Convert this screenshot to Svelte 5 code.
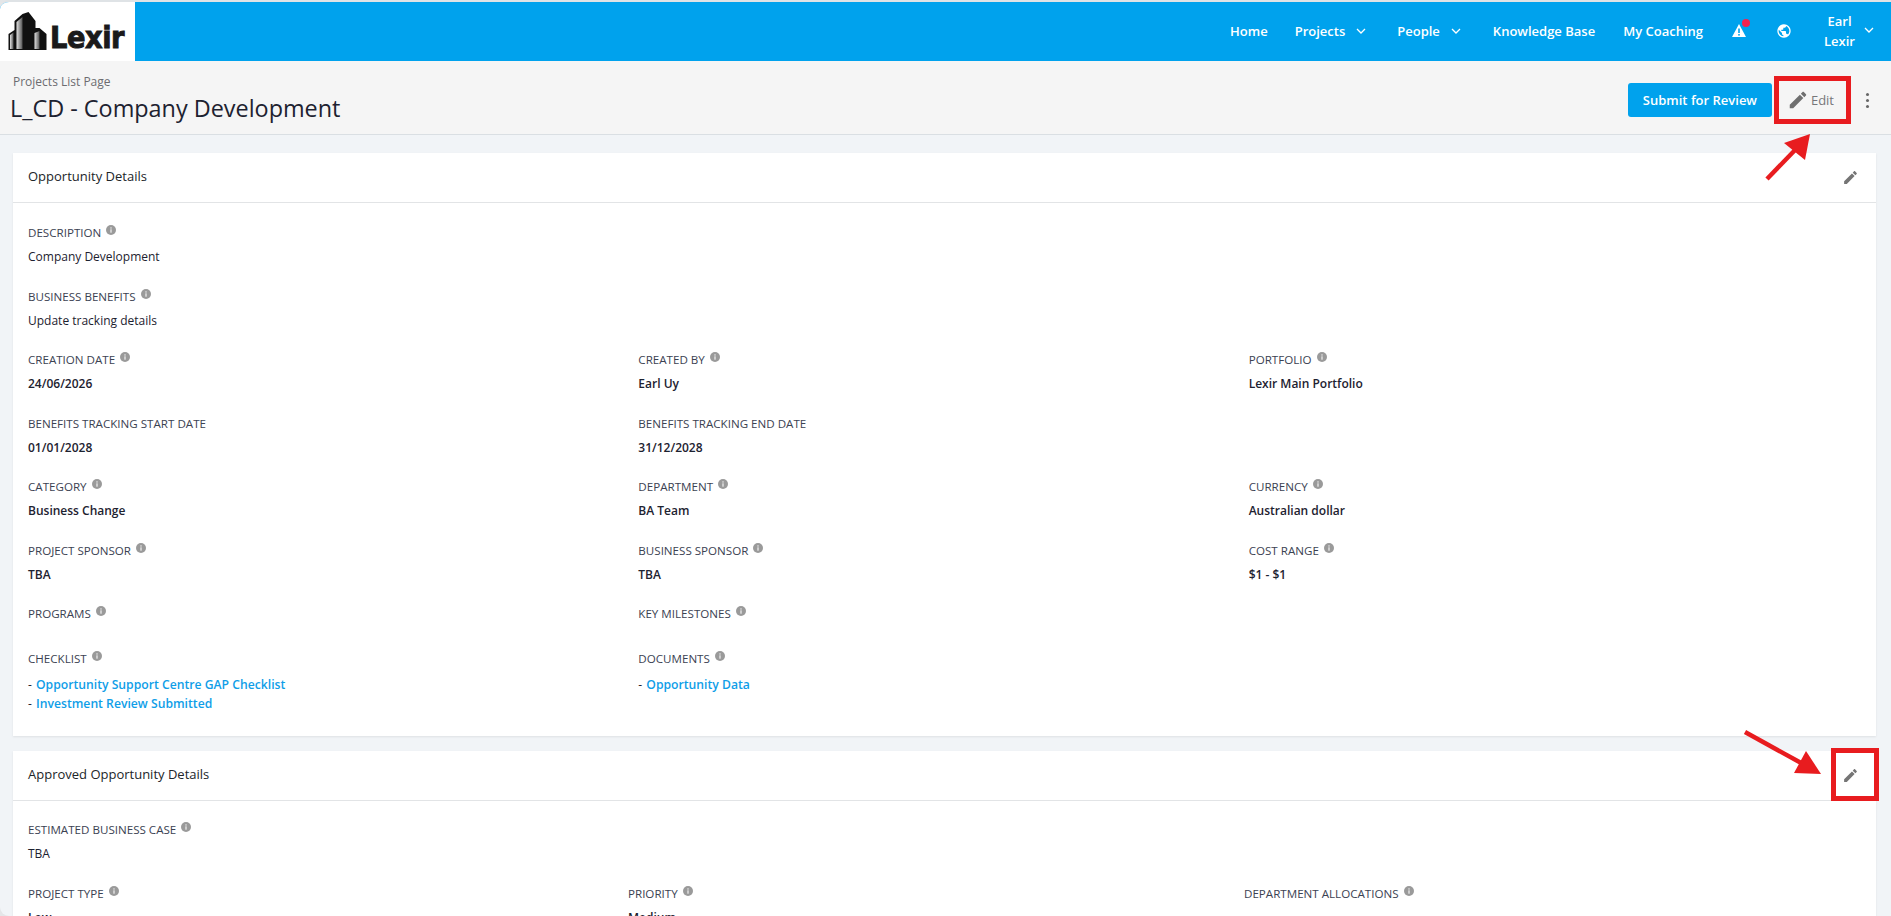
<script>
  const pencil = "M3 17.25V21h3.75L17.81 9.94l-3.75-3.75L3 17.25zM20.71 7.04c.39-.39.39-1.02 0-1.41l-2.34-2.34c-.39-.39-1.02-.39-1.41 0l-1.83 1.83 3.75 3.75 1.83-1.83z";
  const globe = "M12 2C6.48 2 2 6.48 2 12s4.48 10 10 10 10-4.48 10-10S17.52 2 12 2zm-1 17.93c-3.95-.49-7-3.85-7-7.93 0-.62.08-1.21.21-1.79L9 15v1c0 1.1.9 2 2 2v1.93zm6.9-2.54c-.26-.81-1-1.39-1.9-1.39h-1v-3c0-.55-.45-1-1-1H8v-2h2c.55 0 1-.45 1-1V7h2c1.1 0 2-.9 2-2v-.41c2.93 1.19 5 4.06 5 7.41 0 2.08-.8 3.97-2.1 5.39z";

  const wide = [
    { label: "Description", value: "Company Development" },
    { label: "Business Benefits", value: "Update tracking details" }
  ];

  const rows = [
    [{ label: "Creation Date", value: "24/06/2026" }, { label: "Created By", value: "Earl Uy" }, { label: "Portfolio", value: "Lexir Main Portfolio" }],
    [{ label: "Benefits Tracking Start Date", value: "01/01/2028", noInfo: true }, { label: "Benefits Tracking End Date", value: "31/12/2028", noInfo: true }, null],
    [{ label: "Category", value: "Business Change" }, { label: "Department", value: "BA Team" }, { label: "Currency", value: "Australian dollar" }],
    [{ label: "Project Sponsor", value: "TBA" }, { label: "Business Sponsor", value: "TBA" }, { label: "Cost Range", value: "$1 - $1" }]
  ];
</script>

{#snippet info()}
  <svg class="info" viewBox="0 0 10 10" width="10" height="10">
    <circle cx="5" cy="5" r="5" fill="#9a9a9a" />
    <rect x="4.3" y="4.3" width="1.4" height="3.4" fill="#e4e4e4" />
    <rect x="4.3" y="2.3" width="1.4" height="1.3" fill="#e4e4e4" />
  </svg>
{/snippet}

{#snippet chevron()}
  <svg class="chev" viewBox="0 0 10 6" width="10" height="6">
    <path d="M1 1l4 4 4-4" fill="none" stroke="#fff" stroke-width="1.3" />
  </svg>
{/snippet}

{#snippet label(text, noInfo)}
  <div class="label">{text}{#if !noInfo}{@render info()}{/if}</div>
{/snippet}

<div class="page">
  <header class="nav">
    <div class="logo">
      <svg viewBox="0 0 38 38" width="39" height="38">
        <defs>
          <linearGradient id="bld" x1="0" x2="1" y1="0" y2="0">
            <stop offset="0" stop-color="#e2e2e2" />
            <stop offset="1" stop-color="#555" />
          </linearGradient>
        </defs>
        <path d="M0 38V22l6-4V9l8-7 6-2 7 9v7h4l7 6v16z" fill="#111" />
        <path d="M1.5 37V23l3.5-2.5V37z" fill="url(#bld)" />
        <path d="M8 37V10l6-5v32z" fill="url(#bld)" />
        <path d="M26 37V21l5-2v18z" fill="url(#bld)" />
      </svg>
      <span class="logo-text">Lexir</span>
    </div>
    <nav class="links">
      <a class="home">Home</a>
      <a class="projects">Projects {@render chevron()}</a>
      <a class="people">People {@render chevron()}</a>
      <a class="kb">Knowledge Base</a>
      <a class="coaching">My Coaching</a>
      <span class="alert">
        <svg viewBox="0 0 14 13" width="14" height="13">
          <path d="M7 0l7 13H0z" fill="#fff" />
          <rect x="6.2" y="4.5" width="1.6" height="4.5" fill="#00a2ed" />
          <rect x="6.2" y="10" width="1.6" height="1.6" fill="#00a2ed" />
        </svg>
        <i class="dot"></i>
      </span>
      <svg class="globe" viewBox="0 0 24 24" width="16" height="16"><path d={globe} fill="#fff" /></svg>
      <div class="user">
        <div class="user-name">Earl<br />Lexir</div>
        {@render chevron()}
      </div>
    </nav>
  </header>

  <div class="subhead">
    <div>
      <div class="crumb">Projects List Page</div>
      <h1>L_CD - Company Development</h1>
    </div>
    <div class="actions">
      <button class="submit">Submit for Review</button>
      <span class="edit">
        <svg viewBox="0 0 24 24" width="22" height="22"><path d={pencil} fill="#6f6f6f" /></svg>
        Edit
      </span>
      <span class="kebab"><i></i><i></i><i></i></span>
    </div>
  </div>

  <main class="content">
    <section class="card first">
      <div class="card-head">
        <span>Opportunity Details</span>
        <svg viewBox="0 0 24 24" width="17" height="17"><path d={pencil} fill="#757575" /></svg>
      </div>
      <div class="card-body">
        {#each wide as f}
          <div class="field">
            {@render label(f.label)}
            <div class="value plain">{f.value}</div>
          </div>
        {/each}
        {#each rows as row}
          <div class="grid">
            {#each row as f}
              <div class="field">
                {#if f}
                  {@render label(f.label, f.noInfo)}
                  <div class="value">{f.value}</div>
                {/if}
              </div>
            {/each}
          </div>
        {/each}
        <div class="grid short">
          <div class="field">{@render label("Programs")}</div>
          <div class="field">{@render label("Key Milestones")}</div>
          <div class="field"></div>
        </div>
        <div class="grid">
          <div class="field">
            {@render label("Checklist")}
            <div class="value link-line">- <a href="#c">Opportunity Support Centre GAP Checklist</a></div>
            <div class="value link-line">- <a href="#i">Investment Review Submitted</a></div>
          </div>
          <div class="field">
            {@render label("Documents")}
            <div class="value link-line">- <a href="#o">Opportunity Data</a></div>
          </div>
          <div class="field"></div>
        </div>
      </div>
    </section>

    <section class="card">
      <div class="card-head">
        <span>Approved Opportunity Details</span>
        <svg viewBox="0 0 24 24" width="17" height="17"><path d={pencil} fill="#757575" /></svg>
      </div>
      <div class="card-body tight">
        <div class="field">
          {@render label("Estimated Business Case")}
          <div class="value plain">TBA</div>
        </div>
        <div class="grid approved">
          <div class="field">{@render label("Project Type")}<div class="value">Low</div></div>
          <div class="field">{@render label("Priority")}<div class="value">Medium</div></div>
          <div class="field">{@render label("Department Allocations")}</div>
        </div>
      </div>
    </section>
  </main>

  <!-- annotations drawn on top of the screenshot -->
  <div class="mark mark-edit"></div>
  <div class="mark mark-pencil"></div>
  <svg class="arrows" width="1891" height="916" viewBox="0 0 1891 916">
    <line x1="1767" y1="179" x2="1797" y2="148" stroke="#e81c1f" stroke-width="4.5" />
    <polygon points="1810,134 1784,143 1805,160" fill="#e81c1f" />
    <line x1="1745" y1="732" x2="1803" y2="764" stroke="#e81c1f" stroke-width="4.5" />
    <polygon points="1821,774 1806,751 1794,773" fill="#e81c1f" />
  </svg>
</div>

<style>
  :global(body) {
    margin: 0;
    overflow: hidden;
    background: #e4e6e8;
  }

  .page {
    position: relative;
    height: 916px;
    overflow: hidden;
    background: #f1f4f7;
    border-top: 2px solid #dfe3e6;
    border-radius: 9px 0 0 9px;
    box-sizing: border-box;
    font-family: "Open Sans", sans-serif;
    font-size: 12px;
    color: #212529;
  }

  .nav {
    display: flex;
    justify-content: space-between;
    height: 59px;
    background: #00a2ed;
  }

  .logo {
    display: flex;
    align-items: center;
    width: 127px;
    padding-left: 8px;
    background: #fff;
  }

  .logo svg {
    margin-top: -2px;
  }

  .logo-text {
    margin-left: 3px;
    margin-top: 10px;
    font-family: "DejaVu Sans", sans-serif;
    font-weight: 700;
    font-size: 31px;
    line-height: 36px;
    letter-spacing: -0.5px;
    color: #1a1a1a;
    -webkit-text-stroke: 1px #1a1a1a;
    transform: scaleX(0.88);
    transform-origin: left center;
  }

  .links {
    display: flex;
    align-items: center;
    padding-bottom: 2px;
    color: #fff;
    font-size: 13px;
    font-weight: 600;
  }

  .links a {
    display: flex;
    align-items: center;
    white-space: nowrap;
  }

  .chev {
    margin-left: 11px;
  }

  .home { margin-right: 27px; }
  .projects { margin-right: 31px; }
  .people { margin-right: 32px; }
  .kb { margin-right: 28px; }
  .coaching { margin-right: 29px; }

  .alert {
    position: relative;
    display: flex;
    margin-right: 30px;
  }

  .dot {
    position: absolute;
    top: -5px;
    right: -4px;
    width: 8px;
    height: 8px;
    border-radius: 50%;
    background: #f4224f;
  }

  .globe {
    margin-right: 23px;
  }

  .user {
    display: flex;
    align-items: center;
    margin-right: 17px;
  }

  .user-name {
    width: 49px;
    text-align: center;
    line-height: 20px;
  }

  .user .chev {
    margin-left: 0;
    margin-top: -2px;
  }

  .subhead {
    display: flex;
    justify-content: space-between;
    height: 61px;
    padding: 12px 0 0 10px;
    background: #f5f5f5;
    border-bottom: 1px solid #dadfe3;
  }

  .crumb {
    margin-left: 3px;
    margin-top: 1px;
    line-height: 16px;
    color: #6c6c70;
  }

  h1 {
    margin: 1px 0 0;
    font-size: 23.4px;
    font-weight: 400;
    line-height: 34px;
    color: #1d2230;
  }

  .actions {
    display: flex;
    align-items: flex-start;
    margin-top: 10px;
    margin-right: 22px;
  }

  .submit {
    width: 144px;
    height: 34px;
    border: none;
    border-radius: 3px;
    background: #00a2ed;
    color: #fff;
    font-family: inherit;
    font-size: 13px;
    font-weight: 600;
  }

  .edit {
    display: flex;
    align-items: center;
    gap: 2px;
    height: 34px;
    margin-left: 15px;
    color: #77777a;
    font-size: 13px;
  }

  .kebab {
    display: flex;
    flex-direction: column;
    gap: 3px;
    margin-left: 32px;
    margin-top: 10px;
  }

  .kebab i {
    width: 3px;
    height: 3px;
    border-radius: 50%;
    background: #666;
  }

  .content {
    display: flex;
    flex-direction: column;
    gap: 15px;
    padding: 18px 15px 0 13px;
  }

  .card {
    background: #fff;
    box-shadow: 0 1px 2px rgba(0, 0, 0, 0.08);
  }

  .first {
    height: 583px;
  }

  .card-head {
    display: flex;
    align-items: center;
    justify-content: space-between;
    height: 49px;
    padding: 0 17px 0 15px;
    border-bottom: 1px solid #e2e4e6;
    font-size: 13px;
  }

  .card-head span {
    margin-top: -3px;
  }

  .card-head svg {
    margin-top: -1px;
  }

  .card-body {
    padding: 21px 17px 0 15px;
  }

  .tight {
    padding-top: 20px;
  }

  .grid {
    display: grid;
    grid-template-columns: repeat(3, 1fr);
  }

  .approved {
    grid-template-columns: 600px 616px 1fr;
  }

  .field {
    height: 63.5px;
  }

  .short .field {
    height: 45px;
  }

  .label {
    display: flex;
    align-items: flex-start;
    height: 18px;
    line-height: 18px;
    font-size: 11.6px;
    color: #3b4252;
    text-transform: uppercase;
  }

  .info {
    margin-left: 5px;
    margin-top: 1px;
  }

  .value {
    margin-top: 6px;
    line-height: 18px;
    font-weight: 600;
    font-size: 12px;
    color: #1d2230;
  }

  .plain {
    font-weight: 400;
  }

  .link-line {
    margin-top: 0;
    line-height: 19px;
    font-weight: 400;
  }

  .label + .link-line {
    margin-top: 7px;
  }

  .link-line a {
    margin-left: 1px;
    color: #0f9ee8;
    font-size: 12.2px;
    font-weight: 600;
    text-decoration: none;
  }

  .mark {
    position: absolute;
    box-sizing: border-box;
    border: 5px solid #e81c1f;
  }

  .mark-edit {
    left: 1774px;
    top: 74px;
    width: 77px;
    height: 48px;
  }

  .mark-pencil {
    left: 1831px;
    top: 746px;
    width: 48px;
    height: 53px;
  }

  .arrows {
    position: absolute;
    left: 0;
    top: -2px;
    pointer-events: none;
  }
</style>
